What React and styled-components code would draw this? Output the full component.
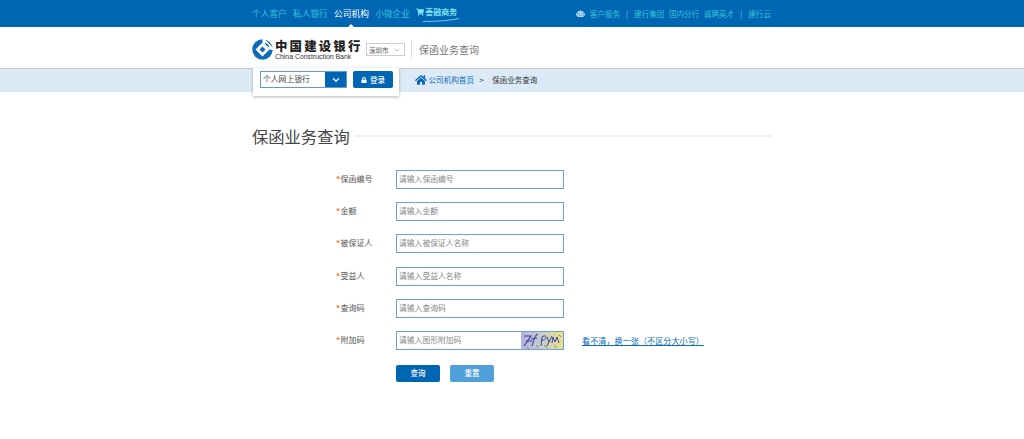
import React from 'react';
import styled, { createGlobalStyle } from 'styled-components';
import { FaHome, FaLock, FaShoppingCart, FaRobot } from 'react-icons/fa';
import { LuChevronDown } from 'react-icons/lu';

const GlobalStyle = createGlobalStyle`
  html, body {
    margin: 0;
    padding: 0;
    background: #fff;
    font-family: "Noto Sans CJK SC", "Liberation Sans", sans-serif;
  }
  * { box-sizing: border-box; }
`;

const FIELDS = [
  { label: '保函编号', placeholder: '请输入保函编号' },
  { label: '金额', placeholder: '请输入金额' },
  { label: '被保证人', placeholder: '请输入被保证人名称' },
  { label: '受益人', placeholder: '请输入受益人名称' },
  { label: '查询码', placeholder: '请输入查询码' },
];

const Logo = () => (
  <svg width="21" height="21" viewBox="0 0 42 42">
    <circle cx="21" cy="21" r="20.5" fill="#0a6cb8" />
    <path d="M21 7 L35 21 L21 35 L7 21 Z" fill="#fff" />
    <path d="M21 15 L27 21 L21 27 L15 21 Z" fill="#0a6cb8" />
    <path d="M21 0 L25 0 L42 17 L42 22 L35 21 L21 7 Z" fill="#fff" />
    <path d="M25 7 C30 8 34 12 35 17 L29 13 Z" fill="#0a6cb8" />
  </svg>
);

const Captcha = () => (
  <svg width="42" height="18" viewBox="0 0 42 18">
    <defs>
      <linearGradient id="captchaBg" x1="0" x2="1" y1="0" y2="0">
        <stop offset="0" stopColor="#b4b3dc" />
        <stop offset="0.5" stopColor="#c6cfc8" />
        <stop offset="1" stopColor="#ecdf8a" />
      </linearGradient>
    </defs>
    <rect width="42" height="18" fill="url(#captchaBg)" />
    <path d="M3 4 L10 4 L3 14 M5 9 L11 9" stroke="#3f3fa8" strokeWidth="1.2" fill="none" />
    <path d="M11 14 C13 9 13 3 17 2 M10 7 L16 6" stroke="#3f3fa8" strokeWidth="1.1" fill="none" />
    <path d="M20 14 L21 5 C23 3 26 4 25 6 C24 8 23 8 21 8 M26 5 L28 10 L31 4 M28 10 L26 14 M31 11 L32 5 L34 10 L36 5 L38 11" stroke="#3f3fa8" strokeWidth="1" fill="none" />
    <path d="M6 15 L8 17 M15 13 L18 16 M23 13 L27 16 M33 13 L36 16 M38 3 L40 5" stroke="#6b6a45" strokeWidth="0.7" />
  </svg>
);

const Swoosh = () => (
  <SwooshMark width="36" height="4" viewBox="0 0 36 4">
    <path d="M0 3.5 C10 3.5 24 3 36 0.5" stroke="#8fdcf0" strokeWidth="0.8" fill="none" />
  </SwooshMark>
);

const App = () => {
  return (
    <>
      <GlobalStyle />
      <TopBar>
        <TopInner>
          <TopNav>
            <TopLink>个人客户</TopLink>
            <TopLink>私人银行</TopLink>
            <TopLink $active>公司机构</TopLink>
            <TopLink>小微企业</TopLink>
            <ShopLink>
              <FaShoppingCart size={8} />善融商务
              <Swoosh />
            </ShopLink>
          </TopNav>
          <TopRight>
            <FaRobot size={9} color="#b5dcf2" />
            <SmallLink>客户服务</SmallLink>
            <Divider>|</Divider>
            <SmallLink>建行集团</SmallLink>
            <SmallLink>国内分行</SmallLink>
            <SmallLink>诚聘英才</SmallLink>
            <Divider>|</Divider>
            <SmallLink>建行云</SmallLink>
          </TopRight>
        </TopInner>
      </TopBar>

      <Header>
        <HeaderInner>
          <Brand>
            <Logo />
            <BrandText>
              <BrandCn>中国建设银行</BrandCn>
              <BrandEn>China Construction Bank</BrandEn>
            </BrandText>
          </Brand>
          <CitySelect>深圳市<LuChevronDown size={8} color="#999" /></CitySelect>
          <HeaderTitle>保函业务查询</HeaderTitle>
        </HeaderInner>
      </Header>

      <SubNav>
        <SubInner>
          <LoginPanel>
            <BankSelect>
              <BankName>个人网上银行</BankName>
              <BankArrow><LuChevronDown size={10} strokeWidth={3} /></BankArrow>
            </BankSelect>
            <LoginButton><FaLock size={6} />登录</LoginButton>
          </LoginPanel>
          <Crumbs>
            <FaHome size={12} color="#0a6cb8" />
            <CrumbLink>公司机构首页</CrumbLink>
            <CrumbSep>&gt;</CrumbSep>
            <CrumbCurrent>保函业务查询</CrumbCurrent>
          </Crumbs>
        </SubInner>
      </SubNav>

      <Main>
        <TitleRow>
          <PageTitle>保函业务查询</PageTitle>
          <TitleRule />
        </TitleRow>
        <Form>
          {FIELDS.map((f) => (
            <Row key={f.label}>
              <Label><Star>*</Star>{f.label}</Label>
              <Input placeholder={f.placeholder} />
            </Row>
          ))}
          <Row>
            <Label><Star>*</Star>附加码</Label>
            <CaptchaBox>
              <CaptchaInput placeholder="请输入图形附加码" />
              <Captcha />
            </CaptchaBox>
            <RefreshLink>看不清，换一张（不区分大小写）</RefreshLink>
          </Row>
          <Buttons>
            <Button $primary>查询</Button>
            <Button>重置</Button>
          </Buttons>
        </Form>
      </Main>
    </>
  );
};

const TopBar = styled.div`
  height: 27px;
  background: #0066b3;
`;

const TopInner = styled.div`
  width: 520px;
  height: 27px;
  margin: 0 auto;
  display: flex;
  justify-content: space-between;
  align-items: center;
`;

const TopNav = styled.div`
  display: flex;
  align-items: center;
  gap: 6.3px;
  height: 100%;
`;

const TopLink = styled.span`
  position: relative;
  font-size: 8.7px;
  line-height: 27px;
  color: ${(p) => (p.$active ? '#ffffff' : '#35c0d8')};

  ${(p) => p.$active && `
    &::after {
      content: '';
      position: absolute;
      left: 50%;
      bottom: 0;
      margin-left: -3px;
      border: 3px solid transparent;
      border-top: 0;
      border-bottom-color: #fff;
    }
  `}
`;

const ShopLink = styled.span`
  position: relative;
  display: flex;
  align-items: center;
  gap: 1px;
  padding-bottom: 3px;
  font-size: 8px;
  font-weight: 700;
  color: #7fe3f0;
  line-height: 10px;
`;

const SwooshMark = styled.svg`
  position: absolute;
  left: 7px;
  bottom: -2px;
`;

const TopRight = styled.div`
  display: flex;
  align-items: center;
  gap: 4.5px;
  padding-right: 1px;
`;

const SmallLink = styled.span`
  font-size: 7.6px;
  line-height: 27px;
  color: #35c0d8;
`;

const Divider = styled.span`
  font-size: 7.5px;
  color: #7fd0e6;
  margin: 0 1.5px;
`;

const Header = styled.div`
  height: 41px;
  background: #fff;
`;

const HeaderInner = styled.div`
  width: 520px;
  height: 41px;
  margin: 0 auto;
  display: flex;
  align-items: center;
  padding-top: 4px;
`;

const Brand = styled.div`
  display: flex;
  align-items: center;
  gap: 2px;
`;

const BrandText = styled.div`
  display: flex;
  flex-direction: column;
  width: 86px;
`;

const BrandCn = styled.div`
  font-size: 12.4px;
  line-height: 12px;
  font-weight: 900;
  letter-spacing: 2.2px;
  color: #222;
  white-space: nowrap;
`;

const BrandEn = styled.div`
  margin-top: 1px;
  font-family: "Liberation Sans", sans-serif;
  font-size: 6.9px;
  line-height: 7px;
  color: #333;
  white-space: nowrap;
`;

const CitySelect = styled.div`
  width: 39px;
  height: 13px;
  margin-left: 5px;
  padding: 0 3px 0 2px;
  border: 1px solid #ccc;
  display: flex;
  align-items: center;
  justify-content: space-between;
  font-size: 6.5px;
  color: #555;
`;

const HeaderTitle = styled.div`
  margin-left: 6px;
  padding-left: 7px;
  height: 19px;
  line-height: 19px;
  border-left: 1px solid #ddd;
  font-size: 10px;
  color: #777;
`;

const SubNav = styled.div`
  height: 24px;
  background: #dceaf7;
  border-top: 1px solid #c4c9ce;
`;

const SubInner = styled.div`
  position: relative;
  width: 520px;
  height: 23px;
  margin: 0 auto;
  padding: 0 0 2px 163px;
  display: flex;
  align-items: center;
`;

const LoginPanel = styled.div`
  position: absolute;
  left: 1px;
  top: -1px;
  width: 146px;
  height: 28px;
  padding: 3px 6px 0 7px;
  background: #fff;
  box-shadow: 0 1px 3px rgba(0, 0, 0, 0.3);
  display: flex;
  align-items: flex-start;
  justify-content: space-between;
`;

const BankSelect = styled.div`
  display: flex;
  width: 87px;
  height: 17px;
  border: 1px solid #5e9bd0;
`;

const BankName = styled.div`
  flex: 1;
  padding-left: 2px;
  font-size: 7.8px;
  line-height: 14px;
  color: #444;
`;

const BankArrow = styled.div`
  width: 21px;
  background: #0066b3;
  color: #fff;
  display: flex;
  align-items: center;
  justify-content: center;
`;

const LoginButton = styled.div`
  width: 40px;
  height: 17px;
  border-radius: 2px;
  background: #0066b3;
  color: #fff;
  font-size: 7.5px;
  font-weight: 500;
  display: flex;
  align-items: center;
  justify-content: center;
  gap: 3px;
`;

const Crumbs = styled.div`
  display: flex;
  align-items: center;
  gap: 1.5px;
`;

const CrumbLink = styled.span`
  font-size: 7.6px;
  color: #0a6cb8;
`;

const CrumbSep = styled.span`
  font-size: 7.5px;
  color: #333;
  margin: 0 7px 0 4px;
`;

const CrumbCurrent = styled.span`
  font-size: 7.5px;
  color: #333;
`;

const Main = styled.div`
  width: 520px;
  margin: 0 auto;
  padding-top: 32px;
`;

const TitleRow = styled.div`
  display: flex;
  align-items: center;
  gap: 5px;
`;

const PageTitle = styled.h1`
  margin: 0;
  font-size: 16.3px;
  line-height: 24px;
  font-weight: 400;
  color: #444;
`;

const TitleRule = styled.div`
  flex: 1;
  height: 2px;
  background: #f1f1f1;
`;

const Form = styled.div`
  padding: 21.5px 0 0 84px;
  display: flex;
  flex-direction: column;
  gap: 13.4px;
`;

const Row = styled.div`
  display: flex;
  align-items: center;
  height: 19px;
`;

const Label = styled.div`
  width: 60px;
  padding-bottom: 2px;
  font-size: 8px;
  color: #555;
`;

const Star = styled.span`
  color: #f0702a;
  font-weight: 700;
  margin-right: 0.5px;
`;

const Input = styled.input`
  width: 168px;
  height: 19px;
  padding: 0 2px 2px;
  border: 1px solid #6aa3d3;
  border-radius: 0;
  outline: none;
  font-family: inherit;
  font-size: 7.8px;
  color: #555;

  &::placeholder {
    color: #888;
    opacity: 1;
  }
`;

const CaptchaBox = styled.div`
  display: flex;
  width: 168px;
  height: 19px;
  border: 1px solid #6aa3d3;
  overflow: hidden;
  svg { flex: none; }
`;

const CaptchaInput = styled(Input)`
  flex: 1;
  min-width: 0;
  height: 17px;
  border: none;
`;

const RefreshLink = styled.span`
  margin-left: 18px;
  padding-bottom: 1px;
  font-size: 8.15px;
  color: #0a6cb8;
  text-decoration: underline;
`;

const Buttons = styled.div`
  display: flex;
  gap: 10px;
  padding-left: 60px;
  margin-top: 1.5px;
`;

const Button = styled.button`
  width: 44px;
  height: 17px;
  padding: 0 0 2px;
  border: none;
  border-radius: 2px;
  background: ${(p) => (p.$primary ? '#0066b3' : '#4fa0da')};
  color: #fff;
  font-family: inherit;
  font-size: 7.5px;
  font-weight: 500;
`;

export default App;
